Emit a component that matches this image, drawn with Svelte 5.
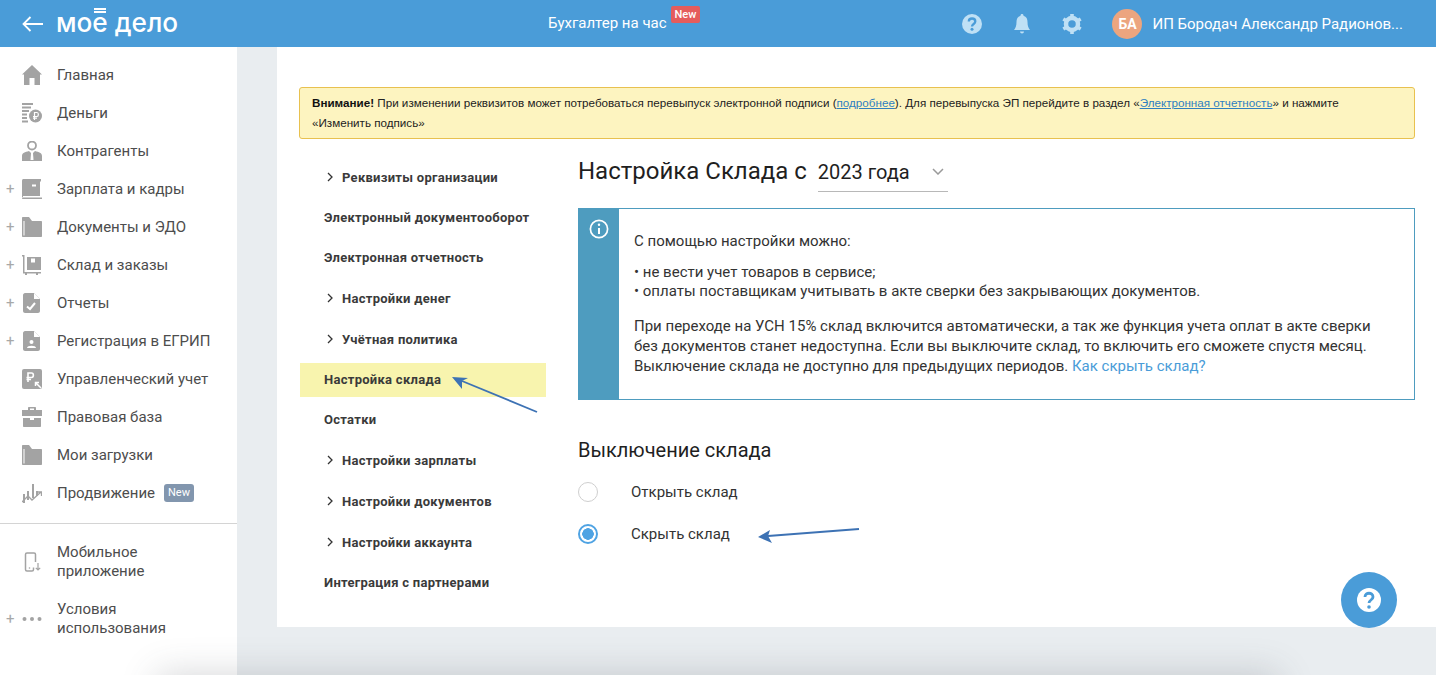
<script>
  const G = '#a3a3a3';
  const menu = [
    { label: 'Главная', icon: 'home' },
    { label: 'Деньги', icon: 'money' },
    { label: 'Контрагенты', icon: 'person' },
    { label: 'Зарплата и кадры', icon: 'wallet', plus: true },
    { label: 'Документы и ЭДО', icon: 'folder', plus: true },
    { label: 'Склад и заказы', icon: 'cart', plus: true },
    { label: 'Отчеты', icon: 'report', plus: true },
    { label: 'Регистрация в ЕГРИП', icon: 'reg', plus: true },
    { label: 'Управленческий учет', icon: 'mgmt' },
    { label: 'Правовая база', icon: 'case' },
    { label: 'Мои загрузки', icon: 'folder' },
    { label: 'Продвижение', icon: 'chart', badge: 'New' }
  ];
  const nav = [
    { label: 'Реквизиты организации', arrow: true },
    { label: 'Электронный документооборот' },
    { label: 'Электронная отчетность' },
    { label: 'Настройки денег', arrow: true },
    { label: 'Учётная политика', arrow: true },
    { label: 'Настройка склада', active: true },
    { label: 'Остатки' },
    { label: 'Настройки зарплаты', arrow: true },
    { label: 'Настройки документов', arrow: true },
    { label: 'Настройки аккаунта', arrow: true },
    { label: 'Интеграция с партнерами' }
  ];
</script>

{#snippet icon(name)}
  <svg class="micon" viewBox="0 0 20 20" fill={G}>
    {#if name === 'home'}
      <path d="M10 0 20 9.500H18V20H12.500V13H7.500V20H2V9.500H0Z"/>
    {:else if name === 'money'}
      <path d="M0 0H11V2H0ZM0 3.500H9V5.500H0ZM0 7H7V9H0ZM0 10.500H5V12.500H0ZM0 14H5V16H0ZM0 17.500H6V19.500H0Z"/>
      <circle cx="13.500" cy="13" r="6.500"/>
      <path d="M12.500 17V9.500H15C16.800 9.500 16.800 13.500 15 13.500H11M11 15.200H15" fill="none" stroke="#fff" stroke-width="1.200"/>
    {:else if name === 'person'}
      <circle cx="10" cy="4.500" r="4" fill="none" stroke={G} stroke-width="1.800"/>
      <path d="M0 20V15C0 12 3 11 7 10L10 13 13 10C17 11 20 12 20 15V20Z"/>
      <path d="M9 12H11L11.500 19H8.500Z" fill="#fff"/>
    {:else if name === 'wallet'}
      <path d="M0 1.500C0 .7.700 0 1.500 0H19V18H0Z"/>
      <path d="M0 18.500H20V20H1C.4 20 0 19.600 0 19Z"/>
      <path d="M1 17H18V2.500H19.500V18H1Z" fill="#fff"/>
      <rect x="10" y="5.500" width="4" height="2" fill="#fff"/>
    {:else if name === 'folder'}
      <path d="M0 1C0 .4.400 0 1 0H7L10 4H19C19.600 4 20 4.400 20 5V19C20 19.600 19.600 20 19 20H1C.4 20 0 19.600 0 19ZM1.500 4V18.500H2.500V4Z" fill-rule="evenodd"/>
    {:else if name === 'cart'}
      <path d="M0 0H2.500V17H19V18.500H16V20H14V18.500H5V20H3V18.500H1V1.500H0Z"/>
      <path d="M5 2H19V15H5Z"/>
      <rect x="9" y="3.500" width="4" height="4" fill="#fff"/>
    {:else if name === 'report'}
      <path d="M3 0H12L18 6V18C18 19 17 20 16 20H3C2 20 1 19 1 18V2C1 1 2 0 3 0Z"/>
      <path d="M12 0V6H18Z" fill="#fff"/>
      <path d="M5 13.500 8 16 13 10" fill="none" stroke="#fff" stroke-width="2"/>
    {:else if name === 'reg'}
      <path d="M3 0H12L18 6V18C18 19 17 20 16 20H3C2 20 1 19 1 18V2C1 1 2 0 3 0Z"/>
      <path d="M12 0V6H18Z" fill="#fff"/>
      <circle cx="9.500" cy="11" r="2" fill="#fff"/>
      <path d="M5 17C5 14 14 14 14 17Z" fill="#fff"/>
    {:else if name === 'mgmt'}
      <rect width="20" height="20" rx="2"/>
      <path d="M6 13V4H9.500C12 4 12 8.500 9.500 8.500H4.500M4.500 10.500H9" fill="none" stroke="#fff" stroke-width="1.600"/>
      <path d="M19 19 13.500 13.500M13.500 17V13.500H17" fill="none" stroke="#fff" stroke-width="1.500"/>
    {:else if name === 'case'}
      <path d="M6 3V1C6 .4 6.400 0 7 0H13C13.600 0 14 .4 14 1V3H20V9H0V3ZM8 1.500V3H12V1.500Z" fill-rule="evenodd"/>
      <path d="M1 11H8V13H12V11H19V19C19 19.600 18.600 20 18 20H2C1.400 20 1 19.600 1 19Z"/>
    {:else if name === 'chart'}
      <path d="M1 11H3V20H1ZM5 8H7V17H5ZM10 1H12V15H10ZM14 8H16V13H14Z"/>
      <path d="M0 19 6 13 10 17 19 9M15 9H19.500V13" fill="none" stroke={G} stroke-width="1.300"/>
    {/if}
  </svg>
{/snippet}

<div class="page">
  <header class="top">
    <div class="brand">
      <svg class="back" viewBox="0 0 21 16" fill="none" stroke="#fff" stroke-width="1.800">
        <path d="M21 8H1.500M8.500 1 1.500 8 8.500 15"/>
      </svg>
      <span class="logo">мое<i class="bars"></i> дело</span>
    </div>
    <div class="center">
      <span>Бухгалтер на час</span>
      <span class="new-red">New</span>
    </div>
    <div class="tools">
      <svg class="tool" viewBox="0 0 20 20">
        <circle cx="10" cy="10" r="10" fill="#bfe0f5"/>
        <path d="M6.800 7.500C6.800 3.500 13.300 3.500 13.300 7.500 13.300 10 10 10 10 12.500" fill="none" stroke="#4a9cd8" stroke-width="2.300"/>
        <circle cx="10" cy="15.300" r="1.500" fill="#4a9cd8"/>
      </svg>
      <svg class="tool bell" viewBox="0 0 20 20" fill="#bfe0f5">
        <path d="M10 0C11 0 11.500.7 11.500 1.700 14.500 2.500 15.500 5 15.500 8 15.500 12 16.500 14 18 16H2C3.500 14 4.500 12 4.500 8 4.500 5 5.500 2.500 8.500 1.700 8.500.7 9 0 10 0Z"/>
        <path d="M8 17.500H12C12 18.800 11 19.500 10 19.500S8 18.800 8 17.500Z"/>
      </svg>
      <svg class="tool gear" viewBox="0 0 20 20">
        <circle cx="10" cy="10" r="6" fill="none" stroke="#bfe0f5" stroke-width="4.500"/>
        <g stroke="#bfe0f5" stroke-width="3.600">
          <path d="M10 0V3.500M10 16.500V20M1.300 5 4.400 6.800M15.600 13.200 18.700 15M1.300 15 4.400 13.200M15.600 6.800 18.700 5"/>
        </g>
      </svg>
      <div class="user">
        <span class="avatar">БА</span>
        <span class="uname">ИП Бородач Александр Радионов...</span>
      </div>
    </div>
  </header>

  <div class="body">
    <aside class="side">
      <ul class="menu">
        {#each menu as m}
          <li class="mi">
            <span class="plus">{m.plus ? '+' : ''}</span>
            {@render icon(m.icon)}
            <span class="ml">{m.label}</span>
            {#if m.badge}<span class="new-grey">{m.badge}</span>{/if}
          </li>
        {/each}
      </ul>
      <div class="divider"></div>
      <div class="mi two first">
        <span class="plus"></span>
        <svg class="micon" viewBox="0 0 20 20" fill="none" stroke={G} stroke-width="1.500">
          <path d="M11.500 15.500V17.500C11.500 18.500 11 19 10 19H5C4 19 3.500 18.500 3.500 17.500V2.500C3.500 1.500 4 1 5 1H12C13 1 13.500 1.500 13.500 2.500V10"/>
          <path d="M16 11V18M13.800 15.800 16 18 18.200 15.800" stroke-width="1.200"/>
          <circle cx="7.500" cy="16" r=".8" fill={G} stroke="none"/>
        </svg>
        <span class="ml">Мобильное<br />приложение</span>
      </div>
      <div class="mi two">
        <span class="plus">+</span>
        <svg class="micon" viewBox="0 0 20 20" fill={G}>
          <circle cx="2.500" cy="10" r="2"/><circle cx="10" cy="10" r="2"/><circle cx="17.500" cy="10" r="2"/>
        </svg>
        <span class="ml">Условия<br />использования</span>
      </div>
    </aside>

    <main class="workspace">
      <section class="sheet">
        <div class="alert">
          <b>Внимание!</b> При изменении реквизитов может потребоваться перевыпуск электронной подписи (<a href="#a">подробнее</a>). Для перевыпуска ЭП перейдите в раздел «<a href="#a">Электронная отчетность</a>» и нажмите<br />«Изменить подпись»
        </div>
        <div class="cols">
          <nav class="snav">
            {#each nav as n}
              <div class="si" class:active={n.active} class:witharrow={n.arrow}>
                {#if n.arrow}
                  <svg class="chev" viewBox="0 0 6 10" fill="none" stroke="#333" stroke-width="1.300"><path d="M1 1 5 5 1 9"/></svg>
                {/if}
                {n.label}
              </div>
            {/each}
          </nav>
          <div class="content">
            <div class="title">
              <h1>Настройка Склада с</h1>
              <div class="select">
                <span>2023 года</span>
                <svg viewBox="0 0 12 7" fill="none" stroke="#9a9a9a" stroke-width="1.500"><path d="M1 1 6 6 11 1"/></svg>
              </div>
            </div>
            <div class="info">
              <div class="info-side">
                <svg viewBox="0 0 20 20" fill="none" stroke="#fff" stroke-width="1.700">
                  <circle cx="10" cy="10" r="8.600"/>
                  <path d="M10 9V15" stroke-width="2"/>
                  <circle cx="10" cy="5.800" r="1.200" fill="#fff" stroke="none"/>
                </svg>
              </div>
              <div class="info-text">
                <p>С помощью настройки можно:</p>
                <p>• не вести учет товаров в сервисе;<br />• оплаты поставщикам учитывать в акте сверки без закрывающих документов.</p>
                <p class="last">При переходе на УСН 15% склад включится автоматически, а так же функция учета оплат в акте сверки<br />без документов станет недоступна. Если вы выключите склад, то включить его сможете спустя месяц.<br />Выключение склада не доступно для предыдущих периодов. <a href="#a">Как скрыть склад?</a></p>
              </div>
            </div>
            <h2>Выключение склада</h2>
            <div class="radio"><span class="dot"></span>Открыть склад</div>
            <div class="radio"><span class="dot on"></span>Скрыть склад</div>
          </div>
        </div>
        <button class="help" aria-label="Помощь">
          <svg viewBox="0 0 24 24">
            <circle cx="12" cy="12" r="12" fill="#fff"/>
            <path d="M8 9C8 4 16 4 16 9 16 12 12 12 12 15" fill="none" stroke="#4a9cd8" stroke-width="2.800"/>
            <circle cx="12" cy="19" r="1.800" fill="#4a9cd8"/>
          </svg>
        </button>
      </section>
      <div class="floor"></div>
    </main>
  </div>

  <svg class="marks" viewBox="0 0 1436 675" fill="#3d72b4" stroke="#3d72b4">
    <path d="M537 412 462 381" stroke-width="1.800" fill="none"/>
    <path d="M452 377 468 378 462 381 462 389Z" stroke="none"/>
    <path d="M859 529 768 536" stroke-width="1.800" fill="none"/>
    <path d="M758 537 770 530 768 536 772 543Z" stroke="none"/>
  </svg>
</div>

<style>
  :global(body) {
    margin: 0;
    background: #e9edf0;
  }
  .page {
    position: relative;
    width: 1436px;
    height: 675px;
    overflow: hidden;
    font-family: Roboto, "Noto Sans", sans-serif;
    color: #333;
  }
  .top {
    height: 47px;
    background: #4a9cd8;
    display: flex;
    align-items: center;
    color: #fff;
  }
  .brand {
    width: 548px;
    flex: none;
    display: flex;
    align-items: center;
    padding-left: 22px;
    box-sizing: border-box;
  }
  .back {
    width: 21px;
    height: 16px;
    margin-right: 13px;
  }
  .logo {
    position: relative;
    font-family: Inter, Roboto, sans-serif;
    font-size: 26.200px;
    font-weight: 500;
    line-height: 30px;
    top: -1px;
  }
  .bars {
    position: absolute;
    left: 38px;
    top: 0;
    width: 12px;
    height: 2px;
    background: #fff;
    box-shadow: 0 3px 0 #fff;
  }
  .center {
    font-size: 15px;
    display: flex;
    align-items: center;
    margin-top: -1px;
  }
  .new-red {
    background: #e55c5c;
    font-size: 11px;
    font-weight: 500;
    border-radius: 2px;
    padding: 0 4px;
    line-height: 17px;
    height: 17px;
    margin: -17px 0 0 4px;
  }
  .tools {
    margin-left: auto;
    display: flex;
    align-items: center;
    padding-right: 33px;
  }
  .tool {
    width: 20px;
    height: 20px;
    margin-right: 30px;
  }
  .user {
    display: flex;
    align-items: center;
    gap: 10px;
  }
  .avatar {
    width: 30px;
    height: 30px;
    border-radius: 50%;
    background: #eca57f;
    font-size: 14px;
    font-weight: 700;
    display: flex;
    align-items: center;
    justify-content: center;
  }
  .uname {
    font-size: 15px;
  }
  .body {
    display: flex;
    height: 628px;
  }
  .side {
    width: 237px;
    flex: none;
    background: #fff;
    padding-top: 9px;
    box-sizing: border-box;
  }
  .menu {
    list-style: none;
    margin: 0;
    padding: 0;
  }
  .mi {
    display: flex;
    align-items: center;
    height: 38px;
    font-size: 15px;
    color: #4d4d4d;
  }
  .plus {
    width: 22px;
    flex: none;
    padding-left: 6px;
    box-sizing: border-box;
    font-size: 15px;
    color: #a8a8a8;
  }
  .micon {
    width: 20px;
    height: 20px;
    flex: none;
    margin-right: 15px;
  }
  .ml {
    line-height: 19px;
  }
  .new-grey {
    margin-left: 9px;
    background: #8296ae;
    color: #fff;
    font-size: 11px;
    line-height: 18px;
    padding: 0 4px;
    border-radius: 3px;
  }
  .divider {
    height: 1px;
    background: #d4d4d4;
    margin-top: 11px;
  }
  .mi.two {
    margin-top: 19px;
  }
  .workspace {
    flex: 1;
    padding-left: 40px;
    display: flex;
    flex-direction: column;
    background: #e9edf0;
  }
  .sheet {
    position: relative;
    background: #fff;
    height: 580px;
    box-sizing: border-box;
    padding: 40px 21px 0 22px;
  }
  .floor {
    flex: 1;
    margin-left: -40px;
  }
  .page::after {
    content: "";
    position: absolute;
    left: 165px;
    width: 1105px;
    top: 682px;
    height: 40px;
    box-shadow: 0 0 36px 8px rgba(70, 75, 80, .22);
    pointer-events: none;
  }
  .alert {
    box-sizing: border-box;
    height: 52px;
    background: #fdf4c0;
    border: 1px solid #e8c14f;
    border-radius: 3px;
    padding: 5px 12px;
    font-family: "Liberation Sans", Arial, sans-serif;
    font-size: 11.650px;
    line-height: 20px;
    color: #222;
    white-space: nowrap;
  }
  .alert b {
    color: #111;
  }
  .alert a {
    color: #2f7fc1;
  }
  .cols {
    display: grid;
    grid-template-columns: 247px 1fr;
    column-gap: 32px;
    margin-top: 18px;
  }
  .snav {
    margin-left: 1px;
  }
  .si {
    height: 40px;
    display: flex;
    align-items: center;
    padding-left: 24px;
    font-size: 13px;
    font-weight: 700;
    letter-spacing: .28px;
    color: #3a3a3a;
    box-sizing: border-box;
  }
  .si:nth-child(3),
  .si:nth-child(4),
  .si:nth-child(7),
  .si:nth-child(8),
  .si:nth-child(9) {
    margin-bottom: 1px;
  }
  .si.witharrow {
    padding-left: 27px;
  }
  .si.active {
    background: #f8f4ae;
    height: 34px;
    margin: 4px 0 2px;
    padding-bottom: 2px;
  }
  .chev {
    width: 6px;
    height: 10px;
    margin-right: 9px;
  }
  .title {
    display: flex;
    align-items: flex-start;
    height: 51px;
  }
  h1 {
    margin: 0;
    font-size: 24px;
    font-weight: 400;
    color: #1f1f1f;
    line-height: 28px;
    margin-right: 11px;
  }
  .select {
    width: 130px;
    height: 35px;
    box-sizing: border-box;
    border-bottom: 1px solid #b8b8b8;
    display: flex;
    justify-content: space-between;
    align-items: flex-start;
    font-size: 20px;
    line-height: 28px;
    color: #1f1f1f;
    padding: 1px 4px 0 0;
  }
  .select svg {
    width: 12px;
    height: 7px;
    margin-top: 10px;
  }
  .info {
    display: flex;
    height: 192px;
    box-sizing: border-box;
    border: 1px solid #4e9cbf;
  }
  .info-side {
    width: 40px;
    background: #4e9cbf;
    display: flex;
    justify-content: center;
    padding-top: 10px;
    box-sizing: border-box;
  }
  .info-side svg {
    width: 20px;
    height: 20px;
  }
  .info-text {
    padding: 23px 0 0 15px;
    font-size: 15px;
    line-height: 19px;
    color: #333;
  }
  .info-text p {
    margin: 0 0 12px;
  }
  .info-text p.last {
    margin-top: 15px;
    line-height: 20px;
  }
  .info-text a {
    color: #4a9cd8;
    text-decoration: none;
  }
  h2 {
    margin: 38px 0 0;
    font-size: 20px;
    font-weight: 400;
    line-height: 24px;
    color: #1f1f1f;
  }
  .radio {
    display: flex;
    align-items: center;
    height: 42px;
    font-size: 15px;
    color: #333;
  }
  h2 + .radio {
    margin-top: 9px;
  }
  .dot {
    box-sizing: border-box;
    width: 20px;
    height: 20px;
    border-radius: 50%;
    border: 1px solid #cfcfcf;
    margin-right: 33px;
  }
  .dot.on {
    border: 2px solid #4fa3e3;
    background: radial-gradient(circle, #4fa3e3 0 5.500px, #fff 6px);
  }
  .help {
    position: absolute;
    left: 1064px;
    top: 525px;
    width: 56px;
    height: 56px;
    border: 0;
    padding: 16px;
    border-radius: 50%;
    background: #4a9cd8;
  }
  .help svg {
    display: block;
    width: 24px;
    height: 24px;
  }
  .marks {
    position: absolute;
    inset: 0;
    width: 1436px;
    height: 675px;
    pointer-events: none;
  }
</style>
